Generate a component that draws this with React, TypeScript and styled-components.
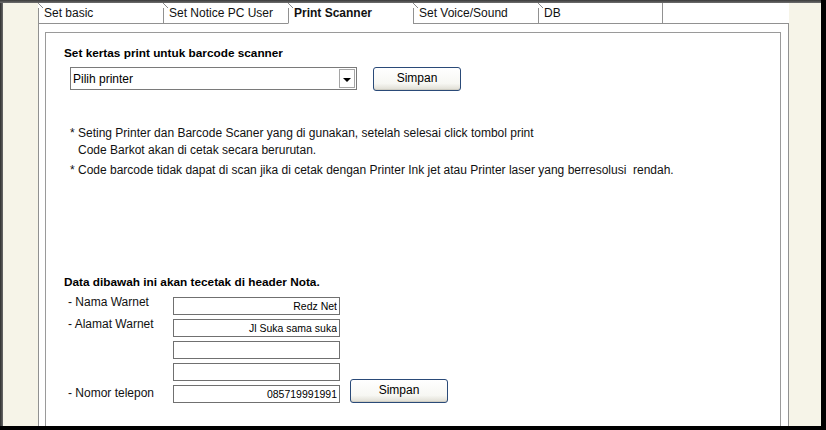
import React from "react";
import styled, { createGlobalStyle } from "styled-components";

const Global = createGlobalStyle`
  html, body { margin: 0; padding: 0; background: #000; }
  body { font-family: "Liberation Sans", Arial, sans-serif; color: #111; }
  * { box-sizing: border-box; }
`;

const Window = styled.div`
  width: 826px;
  height: 430px;
  padding: 0 5px 4px 0;
  background: #000;
  overflow: hidden;
`;

const Screen = styled.div`
  display: flex;
  flex-direction: column;
  width: 821px;
  height: 426px;
`;

const TopEdge = styled.div`
  height: 3px;
  flex: 0 0 3px;
  background: linear-gradient(to bottom, #3a3a3a, #6e6e6e);
`;

const MainRow = styled.div`
  flex: 1;
  display: flex;
  min-height: 0;
`;

const LeftEdge = styled.div`
  width: 3px;
  flex: 0 0 3px;
  background: linear-gradient(to right, #2e2e2e, #6a6a6a);
`;

const Desk = styled.div`
  flex: 1;
  display: flex;
  background: #f6f4e8;
  padding: 0 32px 0 35px;
`;

const TabPanel = styled.div`
  flex: 1;
  display: flex;
  flex-direction: column;
`;

const TabBar = styled.div`
  display: flex;
  height: 21px;
  flex: 0 0 21px;
  background: #fff;
`;

const Tab = styled.div<{ $active?: boolean; $last?: boolean }>`
  position: relative;
  width: 125px;
  flex: 0 0 125px;
  border-left: 1px solid #919191;
  border-right: ${(p) => (p.$last ? "1px solid #919191" : "none")};
  border-bottom: 1px solid ${(p) => (p.$active ? "#fff" : "#919191")};
  padding-left: 5px;
  font-size: 12px;
  line-height: 20px;
  font-weight: ${(p) => (p.$active ? "bold" : "normal")};
  color: #111;
  white-space: nowrap;
  &::before {
    content: "";
    position: absolute;
    top: 0;
    left: -1px;
    width: 5px;
    height: 5px;
    background: linear-gradient(
      to top right,
      #fff 0,
      #fff calc(50% - 0.7px),
      #8a8a8a calc(50% - 0.7px),
      #8a8a8a calc(50% + 0.7px),
      transparent calc(50% + 0.7px)
    );
  }
`;

const TabFiller = styled.div`
  flex: 1;
  border-bottom: 1px solid #919191;
`;

const Body = styled.div`
  flex: 1;
  display: flex;
  background: #fff;
  border-left: 1px solid #919191;
  border-right: 1px solid #919191;
  padding: 8px 7px 0 6px;
`;

const InnerPanel = styled.div`
  flex: 1;
  border: 1px solid #9a9a9a;
  border-bottom: none;
  padding: 13px 0 0 18px;
`;

const Heading = styled.div<{ $gap?: number }>`
  font-size: 11.8px;
  font-weight: bold;
  line-height: 14px;
  color: #000;
  margin-top: ${(p) => p.$gap ?? 0}px;
`;

const PrinterRow = styled.div`
  display: flex;
  align-items: flex-start;
  margin: 7px 0 0 6px;
  gap: 16px;
`;

const SelectBox = styled.div`
  width: 287px;
  height: 23px;
  border: 1px solid #7a7a7a;
  display: flex;
  align-items: center;
  padding: 0 1px 0 2px;
  font-size: 12px;
  color: #000;
`;

const SelectText = styled.span`
  flex: 1;
`;

const DropButton = styled.div`
  width: 16px;
  height: 19px;
  border: 1px solid #a5a5a5;
  background: #fff;
  display: flex;
  align-items: center;
  justify-content: center;
  &::after {
    content: "";
    border-left: 4px solid transparent;
    border-right: 4px solid transparent;
    border-top: 4px solid #000;
    margin-top: 2px;
  }
`;

const Button = styled.div<{ $w: number }>`
  width: ${(p) => p.$w}px;
  height: 24px;
  border: 1px solid #2a4a78;
  border-radius: 3px;
  background: linear-gradient(to bottom, #ffffff 0%, #f7f7f3 70%, #dedcd2 100%);
  box-shadow: inset 0 -1px 0 #d0cec4;
  font-size: 12px;
  line-height: 21px;
  text-align: center;
  color: #000;
`;

const Notes = styled.div`
  margin: 34px 0 0 6px;
  font-size: 12px;
  color: #111;
`;

const NoteLine = styled.div<{ $indent?: number; $gap?: number }>`
  line-height: 17px;
  padding-left: ${(p) => p.$indent ?? 0}px;
  margin-top: ${(p) => p.$gap ?? 0}px;
  white-space: pre;
`;

const Form = styled.div`
  display: grid;
  grid-template-columns: 95px 167px auto;
  grid-auto-rows: 18px;
  row-gap: 4px;
  column-gap: 10px;
  margin: 8px 0 0 4px;
`;

const Label = styled.div<{ $row: number; $shift?: number }>`
  grid-column: 1;
  grid-row: ${(p) => p.$row};
  font-size: 12px;
  line-height: 14px;
  margin-top: ${(p) => p.$shift ?? -2}px;
  color: #111;
  white-space: nowrap;
`;

const Field = styled.input<{ $row: number }>`
  grid-column: 2;
  grid-row: ${(p) => p.$row};
  width: 167px;
  height: 18px;
  border: 1px solid #707070;
  padding: 0 2px;
  margin: 0;
  text-align: right;
  font-family: "Liberation Sans", Arial, sans-serif;
  font-size: 10.5px;
  color: #000;
  background: #fff;
  outline: none;
`;

const FormButtonCell = styled.div`
  grid-column: 3;
  grid-row: 5;
  align-self: end;
`;

const tabs = ["Set basic", "Set Notice PC User", "Print Scanner", "Set Voice/Sound", "DB"];

export default function App() {
  return (
    <>
      <Global />
      <Window>
        <Screen>
          <TopEdge />
          <MainRow>
            <LeftEdge />
            <Desk>
              <TabPanel>
                <TabBar>
                  {tabs.map((t, i) => (
                    <Tab key={t} $active={i === 2} $last={i === tabs.length - 1}>
                      {t}
                    </Tab>
                  ))}
                  <TabFiller />
                </TabBar>
                <Body>
                  <InnerPanel>
                    <Heading>Set kertas print untuk barcode scanner</Heading>
                    <PrinterRow>
                      <SelectBox>
                        <SelectText>Pilih printer</SelectText>
                        <DropButton />
                      </SelectBox>
                      <Button $w={88}>Simpan</Button>
                    </PrinterRow>
                    <Notes>
                      <NoteLine>
                        * Seting Printer dan Barcode Scaner yang di gunakan, setelah selesai click tombol print
                      </NoteLine>
                      <NoteLine $indent={8}>Code Barkot akan di cetak secara berurutan.</NoteLine>
                      <NoteLine $gap={3}>
                        {"* Code barcode tidak dapat di scan jika di cetak dengan Printer Ink jet atau Printer laser yang berresolusi  rendah."}
                      </NoteLine>
                    </Notes>
                    <Heading $gap={96}>Data dibawah ini akan tecetak di header Nota.</Heading>
                    <Form>
                      <Label $row={1}>- Nama Warnet</Label>
                      <Field $row={1} readOnly value="Redz Net" />
                      <Label $row={2}>- Alamat Warnet</Label>
                      <Field $row={2} readOnly value="Jl Suka sama suka" />
                      <Field $row={3} readOnly value="" />
                      <Field $row={4} readOnly value="" />
                      <Label $row={5} $shift={1}>- Nomor telepon</Label>
                      <Field $row={5} readOnly value="085719991991" />
                      <FormButtonCell>
                        <Button $w={98}>Simpan</Button>
                      </FormButtonCell>
                    </Form>
                  </InnerPanel>
                </Body>
              </TabPanel>
            </Desk>
          </MainRow>
        </Screen>
      </Window>
    </>
  );
}
